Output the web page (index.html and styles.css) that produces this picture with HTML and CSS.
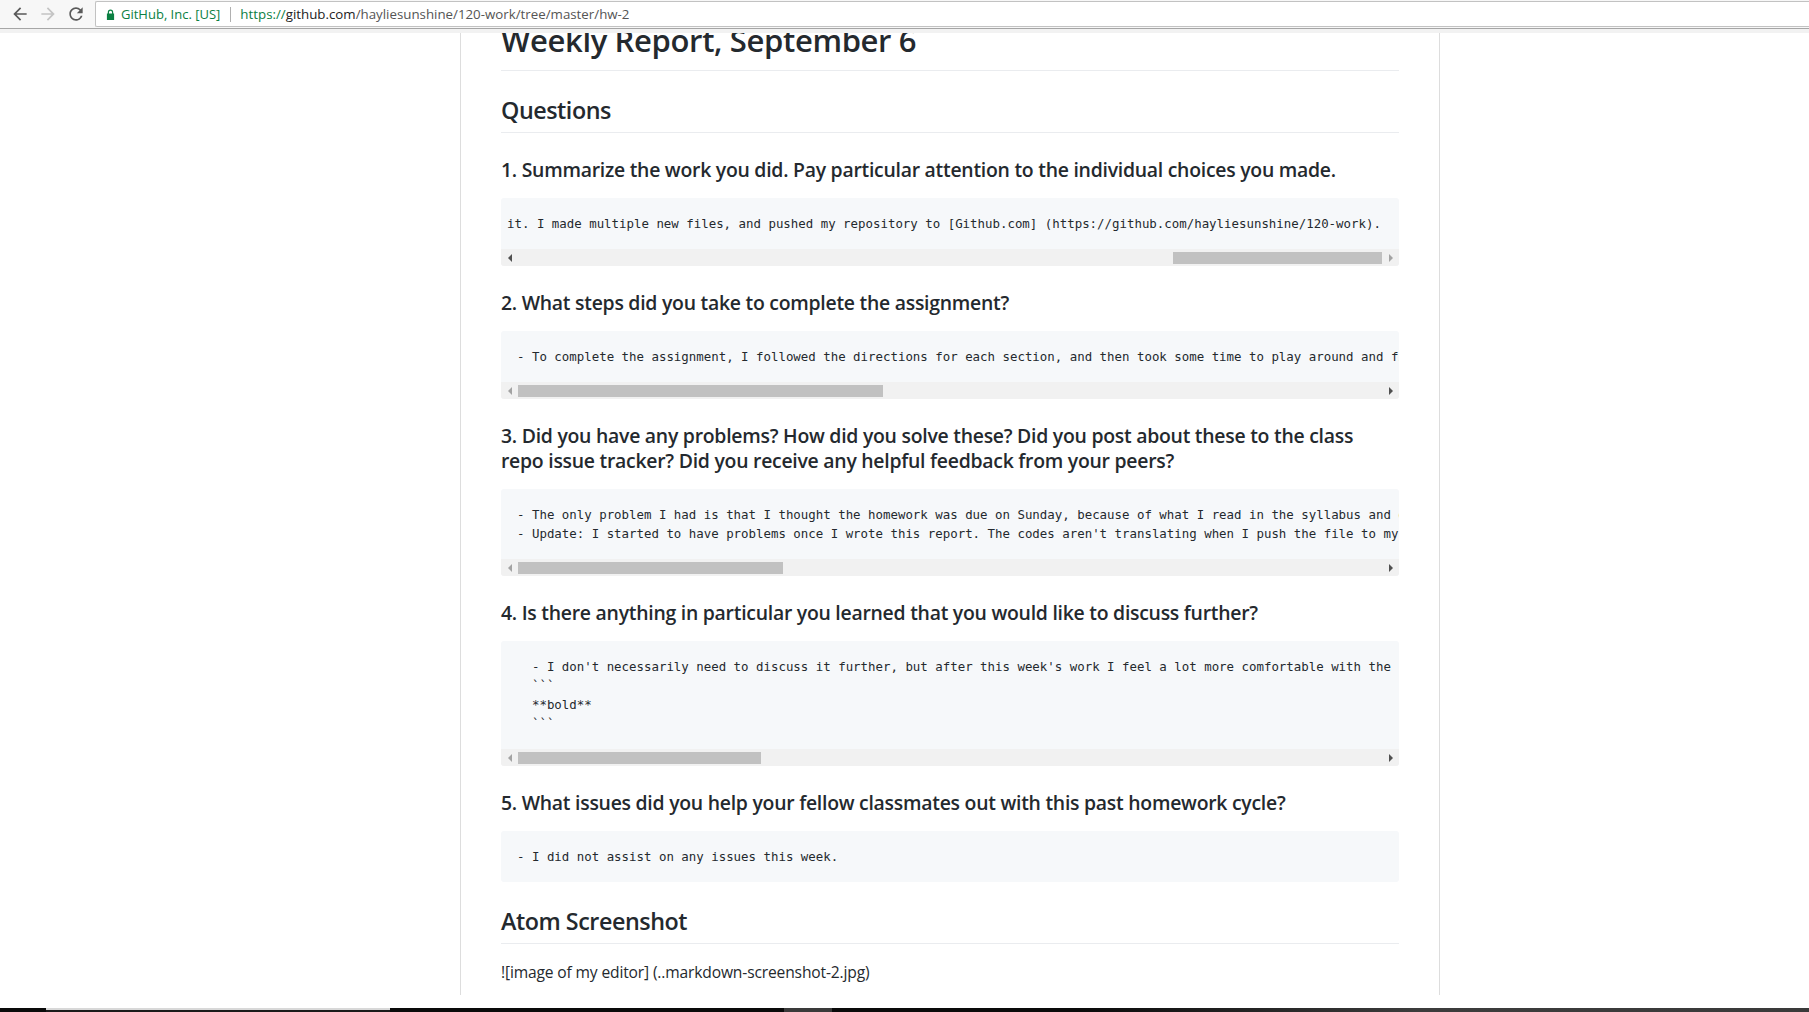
FILE: index.html
```html
<!DOCTYPE html>
<html lang="en">
<head>
<meta charset="utf-8">
<title>120-work/hw-2</title>
<link rel="stylesheet" href="styles.css">
</head>
<body>
<div class="toolbar">
  <div class="nav">
    <svg class="nav-icon active" viewBox="0 0 24 24" width="20" height="20"><path d="M20 11H7.83l5.59-5.59L12 4l-8 8 8 8 1.41-1.41L7.83 13H20v-2z"/></svg>
    <svg class="nav-icon disabled" viewBox="0 0 24 24" width="20" height="20"><path d="M4 11h12.17l-5.59-5.59L12 4l8 8-8 8-1.41-1.41L16.17 13H4v-2z"/></svg>
    <svg class="nav-icon active" viewBox="0 0 24 24" width="20" height="20"><path d="M17.65 6.35A7.958 7.958 0 0 0 12 4c-4.42 0-7.99 3.58-7.99 8s3.57 8 7.99 8c3.73 0 6.84-2.55 7.73-6h-2.08A5.99 5.99 0 0 1 12 18c-3.31 0-6-2.69-6-6s2.69-6 6-6c1.66 0 3.14.69 4.22 1.78L13 11h7V4l-2.35 2.35z"/></svg>
  </div>
  <div class="omnibox">
    <svg class="lock" viewBox="0 0 10 12" width="9" height="11"><path d="M2 5V3.5a3 3 0 0 1 6 0V5h1v7H1V5h1zm1.3 0h3.4V3.5a1.7 1.7 0 0 0-3.4 0V5z"/></svg>
    <span class="ev">GitHub, Inc. [US]</span>
    <span class="sep"></span>
    <span class="url"><span class="scheme">https://</span><span class="host">github.com</span><span class="path">/hayliesunshine/120-work/tree/master/hw-2</span></span>
  </div>
</div>
<div class="toolbar-band"></div>
<main class="viewport">
  <div class="page">
    <article class="markdown-body">
      <h1>Weekly Report, September 6</h1>
      <h2>Questions</h2>

      <h3>1. Summarize the work you did. Pay particular attention to the individual choices you made.</h3>
      <div class="code">
        <pre class="code-text scrolled">it. I made multiple new files, and pushed my repository to [Github.com] (https://github.com/hayliesunshine/120-work).</pre>
        <div class="hscroll">
          <span class="arrow left on"></span>
          <span class="track"><span class="thumb" style="margin-left:655px;width:209px"></span></span>
          <span class="arrow right"></span>
        </div>
      </div>

      <h3>2. What steps did you take to complete the assignment?</h3>
      <div class="code">
        <pre class="code-text">- To complete the assignment, I followed the directions for each section, and then took some time to play around and figure out how everything worked.</pre>
        <div class="hscroll">
          <span class="arrow left"></span>
          <span class="track"><span class="thumb" style="margin-left:0;width:365px"></span></span>
          <span class="arrow right on"></span>
        </div>
      </div>

      <h3>3. Did you have any problems? How did you solve these? Did you post about these to the class repo issue tracker? Did you receive any helpful feedback from your peers?</h3>
      <div class="code">
        <pre class="code-text">- The only problem I had is that I thought the homework was due on Sunday, because of what I read in the syllabus and on the course website.
- Update: I started to have problems once I wrote this report. The codes aren't translating when I push the file to my repository.</pre>
        <div class="hscroll">
          <span class="arrow left"></span>
          <span class="track"><span class="thumb" style="margin-left:0;width:265px"></span></span>
          <span class="arrow right on"></span>
        </div>
      </div>

      <h3>4. Is there anything in particular you learned that you would like to discuss further?</h3>
      <div class="code">
        <pre class="code-text">  - I don't necessarily need to discuss it further, but after this week's work I feel a lot more comfortable with the  syntax.
  ```
  **bold**
  ```</pre>
        <div class="hscroll">
          <span class="arrow left"></span>
          <span class="track"><span class="thumb" style="margin-left:0;width:243px"></span></span>
          <span class="arrow right on"></span>
        </div>
      </div>

      <h3>5. What issues did you help your fellow classmates out with this past homework cycle?</h3>
      <div class="code">
        <pre class="code-text">- I did not assist on any issues this week.</pre>
      </div>

      <h2>Atom Screenshot</h2>
      <p>![image of my editor] (..markdown-screenshot-2.jpg)</p>
    </article>
  </div>
</main>
<div class="taskbar">
  <span class="tb-gap"></span>
  <span class="tb-app"></span>
  <span class="tb-mid"></span>
  <span class="tb-btn"></span>
  <span class="tb-rest"></span>
</div>
</body>
</html>
```

FILE: styles.css
```css
html, body {
  margin: 0;
  padding: 0;
}
body {
  width: 1809px;
  height: 1012px;
  display: flex;
  flex-direction: column;
  overflow: hidden;
  background: #fff;
  font-family: "Open Sans", "Noto Sans", Arial, sans-serif;
}

/* ---------- browser toolbar ---------- */
.toolbar {
  height: 29px;
  flex: none;
  display: flex;
  align-items: center;
  background: #f7f7f7;
  border-bottom: 1px solid #a6a6a6;
  box-sizing: border-box;
}
.nav {
  display: flex;
  align-items: center;
  gap: 8px;
  padding-left: 10px;
  width: 95px;
  box-sizing: border-box;
  flex: none;
}
.nav-icon { flex: none; }
.nav-icon.active { fill: #5a5a5a; }
.nav-icon.disabled { fill: #c4c4c4; }
.omnibox {
  flex: 1;
  height: 26px;
  display: flex;
  align-items: center;
  background: #fff;
  border: 1px solid #c2c2c2;
  border-right: none;
  border-radius: 2px 0 0 2px;
  box-sizing: border-box;
  padding-left: 10px;
  font-family: "Open Sans", Arial, sans-serif;
  font-size: 13px;
}
.lock { fill: #0b8043; flex: none; }
.ev {
  color: #0b8043;
  margin-left: 6px;
}
.sep {
  width: 1px;
  height: 15px;
  background: #b0b0b0;
  margin: 0 9px 0 10px;
}
.url {
  color: #555;
  font-size: 13.3px;
}
.url .scheme { color: #0b8043; }
.url .host { color: #222; }

.toolbar-band {
  height: 4px;
  flex: none;
  background: #f2f2f2;
}

/* ---------- page viewport ---------- */
.viewport {
  flex: 1;
  overflow: hidden;
  min-height: 0;
}
.page {
  margin-left: 460px;
  width: 980px;
  height: 100%;
  box-sizing: border-box;
  border-left: 1px solid #ddd;
  border-right: 1px solid #ddd;
  padding: 0 40px;
  background: #fff;
}
.markdown-body {
  margin-top: -12.6px;
  color: #24292e;
  font-size: 15.6px;
  letter-spacing: -0.15px;
  line-height: 24px;
}
.markdown-body h1,
.markdown-body h2,
.markdown-body h3 {
  font-weight: 600;
  margin: 24px 0 16px;
}
.markdown-body h1 {
  margin-top: 0;
  font-size: 31px;
  letter-spacing: -0.35px;
  line-height: 40px;
  padding-bottom: 9.6px;
  border-bottom: 1px solid #eaecef;
}
.markdown-body h2 {
  font-size: 23.3px;
  letter-spacing: -0.45px;
  line-height: 30px;
  padding-bottom: 7.2px;
  border-bottom: 1px solid #eaecef;
}
.markdown-body h3 {
  font-size: 19.4px;
  letter-spacing: -0.25px;
  line-height: 25px;
}
.markdown-body p {
  margin: 0 0 16px;
}

/* ---------- code blocks ---------- */
.code {
  background: #f6f8fa;
  border-radius: 3px;
  margin-bottom: 16px;
  overflow: hidden;
}
.code-text {
  margin: 0;
  padding: 16px;
  overflow: hidden;
  white-space: pre;
  font-family: "DejaVu Sans Mono", "Liberation Mono", monospace;
  font-size: 12.42px;
  letter-spacing: 0;
  line-height: 19px;
  color: #24292e;
}
.code-text.scrolled {
  padding-left: 6px;
}

/* fake classic horizontal scrollbar */
.hscroll {
  display: flex;
  height: 17px;
  background: #f1f1f1;
}
.arrow {
  width: 17px;
  flex: none;
  display: flex;
  align-items: center;
  justify-content: center;
}
.arrow::before {
  content: "";
  width: 0;
  height: 0;
  border-top: 4px solid transparent;
  border-bottom: 4px solid transparent;
}
.arrow.left::before { border-right: 4px solid #a3a3a3; }
.arrow.right::before { border-left: 4px solid #a3a3a3; }
.arrow.left.on::before { border-right-color: #505050; }
.arrow.right.on::before { border-left-color: #505050; }
.track {
  flex: 1;
  display: flex;
  align-items: center;
}
.thumb {
  height: 12px;
  background: #c1c1c1;
}

/* ---------- taskbar edge ---------- */
.taskbar {
  height: 4px;
  flex: none;
  display: flex;
  background: #0a0a0a;
}
.tb-gap { width: 46px; }
.tb-app {
  width: 344px;
  background: linear-gradient(#d8d8d8 0 50%, #1a1a1a 50%);
}
.tb-mid { width: 394px; }
.tb-btn { width: 48px; background: #3a3a3a; }
.tb-rest {
  flex: 1;
  background: linear-gradient(90deg, #0a0a0a 0, #0a0a0a 25%, #3c3c3c 60%, #3a3a3a 100%);
}
```
